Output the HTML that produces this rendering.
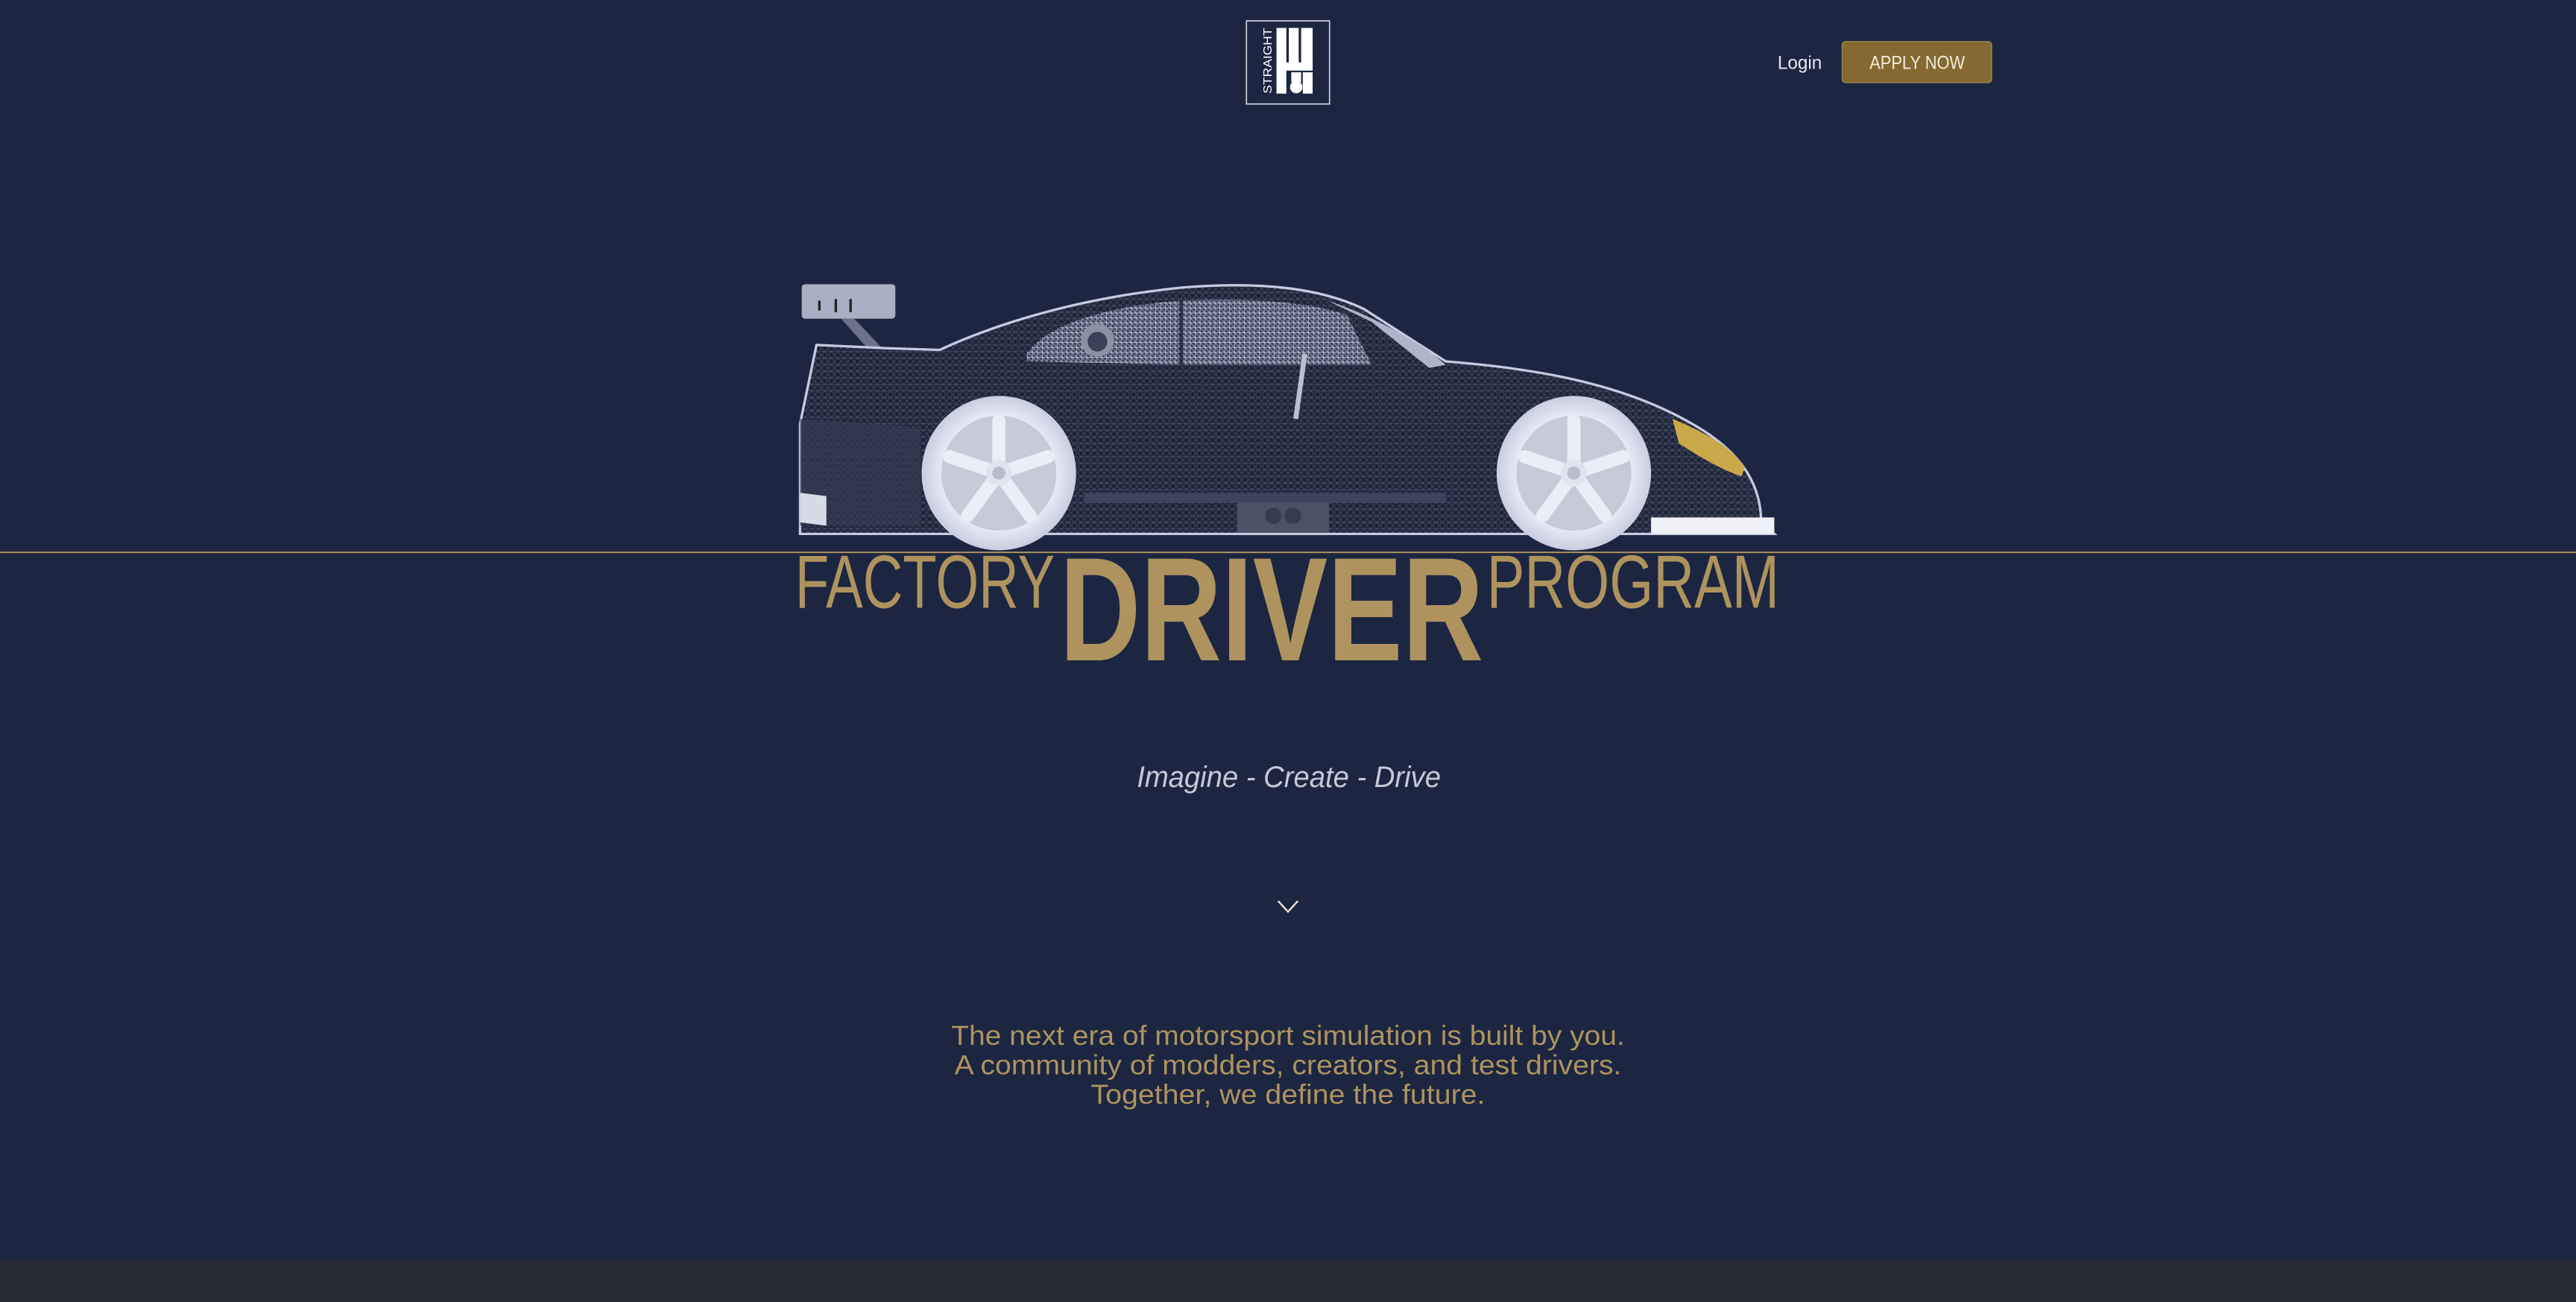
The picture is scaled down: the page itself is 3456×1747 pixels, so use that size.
<!DOCTYPE html>
<html><head><meta charset="utf-8"><style>
html,body{margin:0;padding:0;background:#1c2640;width:3456px;height:1747px;overflow:hidden}
svg{display:block}
</style></head><body>
<svg width="3456" height="1747" viewBox="0 0 1568 792.6" preserveAspectRatio="none" xmlns="http://www.w3.org/2000/svg">
<defs>
<pattern id="mesh" width="4" height="4" patternUnits="userSpaceOnUse">
<rect width="4" height="4" fill="#1d2336"/>
<path d="M0 0L4 4M4 0L0 4M0 2H4" stroke="#7f89a6" stroke-width="0.35" opacity="0.45"/>
</pattern>
<pattern id="mesh2" width="3" height="3" patternUnits="userSpaceOnUse">
<rect width="3" height="3" fill="#3a4258"/>
<path d="M0 0L3 3M0 1.5H3M1.5 0V3" stroke="#b4bbd0" stroke-width="0.4"/>
</pattern>
<radialGradient id="wh" cx="0.5" cy="0.5" r="0.5">
<stop offset="0.7" stop-color="#eceef7"/><stop offset="1" stop-color="#c9cde0"/>
</radialGradient>
</defs>
<rect x="0" y="0" width="1568" height="792.6" fill="#1c2640"/>
<rect x="0" y="767" width="1568" height="26" fill="#262b36"/>

<!-- logo -->
<rect x="758.7" y="12.7" width="50.6" height="50.6" fill="none" stroke="#c9ccd6" stroke-width="0.8"/>
<text transform="translate(774,57) rotate(-90)" font-family="Liberation Sans, sans-serif" font-size="7.2" fill="#fff" textLength="40" lengthAdjust="spacingAndGlyphs">STRAIGHT</text>
<rect x="777" y="17" width="6" height="40" fill="#fff"/>
<rect x="784.5" y="17" width="6" height="24" fill="#fff"/>
<rect x="792" y="17" width="7" height="24" fill="#fff"/>
<rect x="777" y="38" width="22" height="5" fill="#fff"/>
<rect x="793" y="44" width="6" height="13" fill="#fff"/>
<rect x="786" y="44" width="6" height="6" fill="#fff"/>
<circle cx="789" cy="53" r="3.8" fill="#fff"/>

<!-- header right -->
<text x="1082" y="42" font-family="Liberation Sans, sans-serif" font-size="11.5" fill="#e6e8ee" textLength="27" lengthAdjust="spacingAndGlyphs">Login</text>
<rect x="1121.3" y="25.3" width="91" height="25" rx="2" fill="#846a32" stroke="#a48a4c" stroke-width="0.6"/>
<text x="1138" y="42" font-family="Liberation Sans, sans-serif" font-size="11.5" fill="#f2ecdd" textLength="58" lengthAdjust="spacingAndGlyphs">APPLY NOW</text>

<!-- car -->
<rect x="488" y="173" width="57" height="21" rx="2" fill="#a8afc2"/>
<rect x="498" y="183" width="1.5" height="6" fill="#222"/><rect x="508" y="182" width="1.5" height="8" fill="#222"/><rect x="517" y="182" width="1.5" height="8" fill="#222"/>
<path d="M512 194L520 194L537 212L528 212Z" fill="#6b7388"/>
<path d="M487 320L487 258L497 210L540 212L572 213C600 200 650 182 720 175C770 171 805 176 830 188L880 220C930 224 985 232 1030 258C1060 275 1072 295 1072 318L1080 325L487 325Z" fill="url(#mesh)" stroke="#c5cbe0" stroke-width="1.5"/>
<path d="M625 215C640 195 680 186 718 183L718 222L625 220Z" fill="url(#mesh2)"/>
<path d="M720 183C760 181 800 184 820 192L835 222L720 222Z" fill="url(#mesh2)"/>
<path d="M808 183C830 190 860 205 880 222L870 224L835 196Z" fill="#aeb5c8"/>
<circle cx="668" cy="207" r="10" fill="#8a92a6"/><circle cx="668" cy="208" r="6" fill="#3a4258"/>
<path d="M487 255L487 320L560 320L560 260Z" fill="#333c52" opacity="0.7"/>
<path d="M487 300L503 302L503 320L487 318Z" fill="#d7dbe7"/>
<rect x="753" y="304" width="56" height="20" fill="#4a5266"/>
<circle cx="775" cy="314" r="5" fill="#353c4e"/><circle cx="787" cy="314" r="5" fill="#353c4e"/>
<rect x="1005" y="315" width="75" height="10" fill="#f0f1f6"/>
<path d="M1018 255C1035 262 1055 272 1062 285L1060 290C1045 285 1030 275 1022 270Z" fill="#c9a94a"/>
<rect x="790" y="215" width="3" height="40" fill="#b9c0d2" transform="rotate(8 790 235)"/>
<path d="M660 300L880 300L880 306L660 306Z" fill="#3b445c"/>
<!-- wheels -->
<g>
<circle cx="608" cy="288" r="47" fill="url(#wh)"/>
<circle cx="608" cy="288" r="35" fill="#c7cad9"/>
<g stroke="#eceef7" stroke-width="8" stroke-linecap="round"><path d="M608 288L608 256M608 288L638 278M608 288L627 314M608 288L589 314M608 288L578 278"/></g>
<circle cx="608" cy="288" r="8" fill="#e1e4ef"/><circle cx="608" cy="288" r="4" fill="#b8bccc"/>
</g>
<g>
<circle cx="958" cy="288" r="47" fill="url(#wh)"/>
<circle cx="958" cy="288" r="35" fill="#c7cad9"/>
<g stroke="#eceef7" stroke-width="8" stroke-linecap="round"><path d="M958 288L958 256M958 288L988 278M958 288L977 314M958 288L939 314M958 288L928 278"/></g>
<circle cx="958" cy="288" r="8" fill="#e1e4ef"/><circle cx="958" cy="288" r="4" fill="#b8bccc"/>
</g>

<!-- line -->
<rect x="0" y="335.8" width="1568" height="0.9" fill="#ae935f"/>

<!-- title -->
<g font-family="Liberation Sans, sans-serif" fill="#ae935f">
<text x="484" y="370" font-size="46" textLength="158" lengthAdjust="spacingAndGlyphs">FACTORY</text>
<text x="645" y="402" font-size="90" font-weight="bold" textLength="258" lengthAdjust="spacingAndGlyphs">DRIVER</text>
<text x="905" y="370" font-size="46" textLength="178" lengthAdjust="spacingAndGlyphs">PROGRAM</text>
</g>

<text x="692" y="479" font-family="Liberation Sans, sans-serif" font-style="italic" font-size="18" fill="#c6cad6" textLength="185" lengthAdjust="spacingAndGlyphs">Imagine - Create - Drive</text>

<path d="M778 548.5L784 555L790 548.5" fill="none" stroke="#e9e2d2" stroke-width="1.1"/>

<g font-family="Liberation Sans, sans-serif" font-size="17" fill="#ae935f">
<text x="579" y="636" textLength="410" lengthAdjust="spacingAndGlyphs">The next era of motorsport simulation is built by you.</text>
<text x="581" y="654" textLength="406" lengthAdjust="spacingAndGlyphs">A community of modders, creators, and test drivers.</text>
<text x="664" y="672" textLength="240" lengthAdjust="spacingAndGlyphs">Together, we define the future.</text>
</g>
</svg>
</body></html>
